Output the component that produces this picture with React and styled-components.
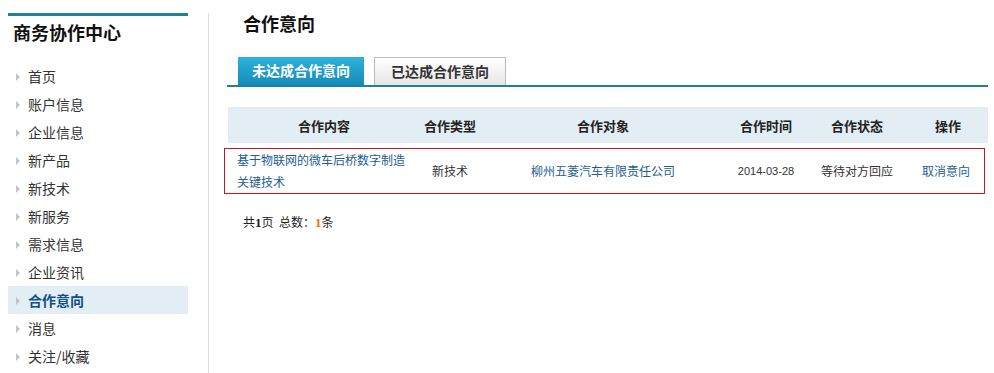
import React from 'react';
import styled, { createGlobalStyle } from 'styled-components';

const GlobalStyle = createGlobalStyle`
  html, body {
    margin: 0;
    padding: 0;
    background: #fff;
  }
  body {
    font-family: "Noto Sans CJK SC", "Liberation Sans", sans-serif;
    color: #333;
  }
`;

const Page = styled.div`
  display: flex;
  align-items: stretch;
  padding: 13px 6px 0 8px;
  min-height: 360px;
`;

// Sidebar
const Sidebar = styled.aside`
  width: 180px;
  flex: none;
  border-top: 3px solid #1f8096;
`;

const SideTitle = styled.h2`
  margin: 0 0 14px;
  padding-left: 5px;
  font-size: 18px;
  line-height: 32px;
  font-weight: bold;
  color: #111;
`;

const Menu = styled.ul`
  list-style: none;
  margin: 0;
  padding: 0;
`;

const MenuItem = styled.li`
  display: flex;
  align-items: center;
  gap: 8px;
  height: 28px;
  padding-left: 8px;
  font-size: 14px;
  background: ${p => (p.active ? '#e3eef5' : 'transparent')};
  color: ${p => (p.active ? '#0f4f8c' : '#333')};
  font-weight: ${p => (p.active ? 'bold' : 'normal')};
`;

const Arrow = styled.span`
  width: 0;
  height: 0;
  border-top: 4px solid transparent;
  border-bottom: 4px solid transparent;
  border-left: 4px solid #c4c4c4;
  margin-top: 1px;
`;

// Main
const Main = styled.main`
  flex: 1;
  margin-left: 20px;
  border-left: 1px solid #dedede;
  padding-left: 18px;
`;

const Title = styled.h1`
  margin: 0;
  padding-left: 16px;
  font-size: 18px;
  line-height: 20px;
  font-weight: bold;
  color: #111;
`;

const Tabs = styled.div`
  display: flex;
  align-items: flex-end;
  gap: 10px;
  margin-top: 24px;
  padding-left: 11px;
  border-bottom: 2px solid #1f8096;
`;

const Tab = styled.div`
  box-sizing: border-box;
  height: 28px;
  padding: 0 ${p => (p.active ? 14 : 16)}px;
  font-size: 14px;
  font-weight: bold;
  line-height: 27px;
  color: ${p => (p.active ? '#fff' : '#333')};
  background: ${p =>
    p.active
      ? 'linear-gradient(#2db2db, #168cb8)'
      : 'linear-gradient(#ffffff, #e6e6e6)'};
  border: ${p => (p.active ? 'none' : '1px solid #bcbcbc')};
  border-bottom: none;
`;

const cols = '192px 60px 246px 80px 102px 80px';

const TableHead = styled.div`
  display: grid;
  grid-template-columns: ${cols};
  margin: 20px 0 0 1px;
  height: 36px;
  align-items: center;
  background: #e3eef4;
  font-size: 13px;
  font-weight: bold;
  color: #222;
  text-align: center;
`;

const Row = styled.div`
  display: grid;
  grid-template-columns: 192px 60px 246px 80px 102px 76px;
  margin: 5px 0 0 -3px;
  width: max-content;
  padding-left: 3px;
  border: 1px solid #d0141c;
  font-size: 12px;
  line-height: 22px;
  align-items: center;
  text-align: center;
`;

const Cell = styled.div`
  color: ${p => (p.link ? '#1d5d91' : '#333')};
  text-align: ${p => (p.left ? 'left' : 'center')};
  padding: ${p => (p.left ? '0 14px 0 9px' : '0')};
  font-family: ${p => (p.latin ? '"Liberation Sans", sans-serif' : 'inherit')};
  font-size: ${p => (p.latin ? '11px' : '12px')};
  white-space: ${p => (p.left ? 'normal' : 'nowrap')};
`;

const Pager = styled.div`
  margin-top: 19px;
  padding-left: 16px;
  font-size: 12px;
  line-height: 18px;
  color: #222;
`;

const Num = styled.b`
  font-family: "Liberation Serif", serif;
  font-size: 13px;
  color: ${p => p.color || '#222'};
`;

const menu = ['首页', '账户信息', '企业信息', '新产品', '新技术', '新服务', '需求信息', '企业资讯', '合作意向', '消息', '关注/收藏'];

export default function App() {
  return (
    <>
      <GlobalStyle />
      <Page>
        <Sidebar>
          <SideTitle>商务协作中心</SideTitle>
          <Menu>
            {menu.map(item => (
              <MenuItem key={item} active={item === '合作意向'}>
                <Arrow />
                {item}
              </MenuItem>
            ))}
          </Menu>
        </Sidebar>
        <Main>
          <Title>合作意向</Title>
          <Tabs>
            <Tab active>未达成合作意向</Tab>
            <Tab>已达成合作意向</Tab>
          </Tabs>
          <TableHead>
            <div>合作内容</div>
            <div>合作类型</div>
            <div>合作对象</div>
            <div>合作时间</div>
            <div>合作状态</div>
            <div>操作</div>
          </TableHead>
          <Row>
            <Cell link left>基于物联网的微车后桥数字制造关键技术</Cell>
            <Cell>新技术</Cell>
            <Cell link>柳州五菱汽车有限责任公司</Cell>
            <Cell latin>2014-03-28</Cell>
            <Cell>等待对方回应</Cell>
            <Cell link>取消意向</Cell>
          </Row>
          <Pager>
            共<Num>1</Num>页&nbsp;&nbsp;总数：<Num color="#e8720c">1</Num>条
          </Pager>
        </Main>
      </Page>
    </>
  );
}
